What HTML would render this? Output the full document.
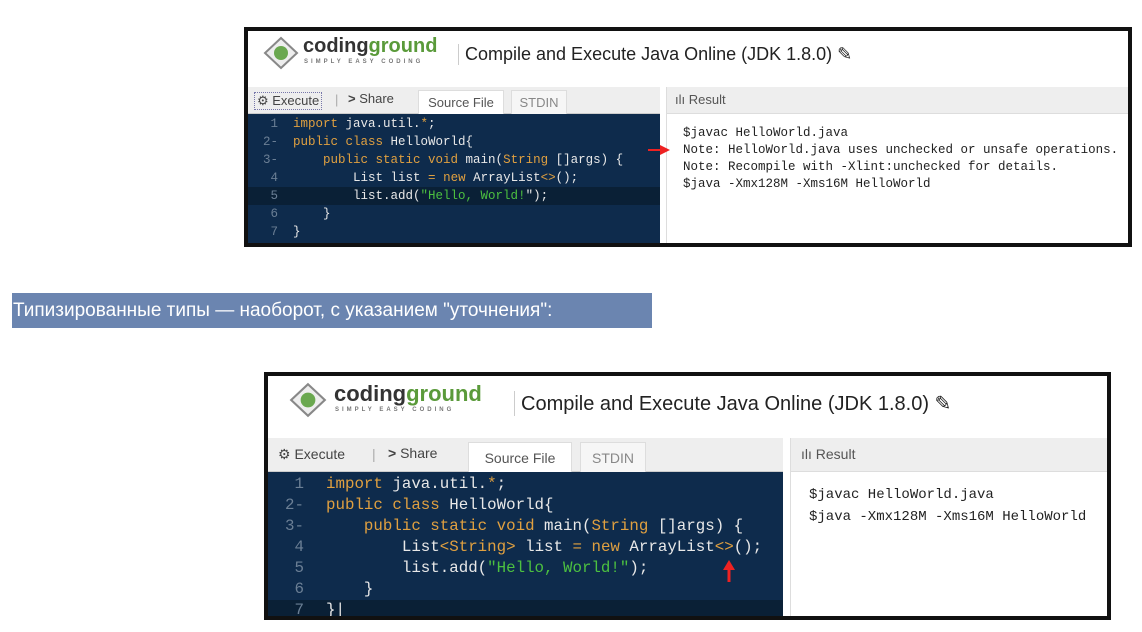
<!DOCTYPE html>
<html><head><meta charset="utf-8"><style>
*{margin:0;padding:0;box-sizing:border-box}
body{width:1142px;height:632px;background:#fff;position:relative;overflow:hidden;font-family:"Liberation Sans",sans-serif}
.box{position:absolute;border:4px solid #111;background:#fff;overflow:hidden}
.hdr{position:absolute;left:0;right:0;top:0;background:#fff}
.logo{position:absolute;font-family:"Liberation Sans",sans-serif;font-weight:bold;color:#333}
.logo b{color:#5a9a3a}
.sub{position:absolute;font-size:6px;letter-spacing:3px;color:#777;font-weight:bold}
.title{position:absolute;color:#222;font-family:"Liberation Sans",sans-serif;border-left:1px solid #ccc}
.tb{position:absolute;left:0;background:#eee;border-bottom:1px solid #ccc}
.tab{position:absolute;background:#f6f6f6;border:1px solid #ddd;border-bottom:none;color:#555;text-align:center}
.code{position:absolute;background:#0e2b4c;font-family:"Liberation Mono",monospace;color:#e8e8e8;white-space:pre}
.code div{position:absolute;left:0;right:0}
.ln{color:#6b7f95;position:absolute;text-align:right}
.c{position:absolute}
.k{color:#e0a040}.s{color:#4cc040}
.res{position:absolute;background:#fff;border-left:1px solid #ddd}
.rh{position:absolute;left:0;right:0;top:0;background:#eee;color:#555;border-bottom:1px solid #ddd}
.out{position:absolute;font-family:"Liberation Mono",monospace;color:#222;white-space:pre}
#b1 .ln{width:30px;left:0}#b1 .c{left:45px}
#b2 .ln{width:36px;left:0}#b2 .c{left:58px}
</style></head><body>

<div class="box" style="left:244px;top:27px;width:888px;height:220px">
 <div class="hdr" style="height:56px">
  <svg style="position:absolute;left:14px;top:5px" width="38" height="34" viewBox="0 0 38 34"><path d="M19 2 L35 17 L19 32 L3 17Z" fill="#eee" stroke="#888" stroke-width="2"/><circle cx="19" cy="17" r="7" fill="#6aa84f"/></svg>
  <div class="logo" style="left:55px;top:4px;font-size:20px">coding<b>ground</b></div>
  <div class="sub" style="left:56px;top:28px">SIMPLY EASY CODING</div>
  <div class="title" style="left:210px;top:13px;font-size:18px;padding-left:6px">Compile and Execute Java Online (JDK 1.8.0) ✎</div>
 </div>
 <div class="tb" style="top:56px;width:412px;height:27px;font-size:13px;color:#444">
  <span style="position:absolute;left:6px;top:5px;border:1px dotted #77a;padding:0 2px">⚙ Execute</span>
  <span style="position:absolute;left:87px;top:5px;color:#aaa">|</span>
  <span style="position:absolute;left:100px;top:4px"><b>&gt;</b> Share</span>
  <div class="tab" style="left:170px;top:3px;width:86px;height:24px;line-height:24px;background:#fff">Source File</div>
  <div class="tab" style="left:263px;top:3px;width:56px;height:24px;line-height:24px;color:#888">STDIN</div>
 </div>
 <div class="code" id="b1" style="left:0;top:83px;width:412px;height:133px;font-size:12.5px;line-height:18px">
  <div style="top:1px;height:18px"><span class="ln">1</span><span class="c"><span class="k">import</span> java.util.<span class="k">*</span>;</span></div>
  <div style="top:19px;height:18px"><span class="ln">2-</span><span class="c"><span class="k">public class</span> HelloWorld{</span></div>
  <div style="top:37px;height:18px"><span class="ln">3-</span><span class="c">    <span class="k">public static void</span> main(<span class="k">String</span> []args) {</span></div>
  <div style="top:55px;height:18px"><span class="ln">4</span><span class="c">        List list <span class="k">=</span> <span class="k">new</span> ArrayList<span class="k">&lt;&gt;</span>();</span></div>
  <div style="top:73px;height:18px;background:#0a2036"><span class="ln">5</span><span class="c">        list.add(<span class="s">"Hello, World!</span>");</span></div>
  <div style="top:91px;height:18px"><span class="ln">6</span><span class="c">    }</span></div>
  <div style="top:109px;height:18px"><span class="ln">7</span><span class="c">}</span></div>
 </div>
 <div class="res" style="left:418px;top:56px;width:470px;height:164px">
  <div class="rh" style="height:27px;font-size:13px;padding:5px 8px">ılı Result</div>
  <div class="out" style="left:16px;top:38px;font-size:12.5px;line-height:17px">$javac HelloWorld.java
Note: HelloWorld.java uses unchecked or unsafe operations.
Note: Recompile with -Xlint:unchecked for details.
$java -Xmx128M -Xms16M HelloWorld</div>
 </div>
 <svg style="position:absolute;left:400px;top:114px" width="24" height="10"><path d="M0 5 H14" stroke="#e22" stroke-width="2"/><path d="M12 0 L22 5 L12 10Z" fill="#e22"/></svg>
</div>

<div style="position:absolute;left:12px;top:293px;width:640px;height:35px;background:#6b85b0;color:#fff;font-size:19px;line-height:35px;padding-left:1px">Типизированные типы — наоборот, с указанием "уточнения":</div>

<div class="box" style="left:264px;top:372px;width:847px;height:248px">
 <div class="hdr" style="height:60px">
  <svg style="position:absolute;left:20px;top:6px" width="40" height="36" viewBox="0 0 38 34"><path d="M19 2 L35 17 L19 32 L3 17Z" fill="#eee" stroke="#888" stroke-width="2"/><circle cx="19" cy="17" r="7" fill="#6aa84f"/></svg>
  <div class="logo" style="left:66px;top:5px;font-size:22px">coding<b>ground</b></div>
  <div class="sub" style="left:67px;top:31px">SIMPLY EASY CODING</div>
  <div class="title" style="left:246px;top:15px;font-size:20px;padding-left:6px">Compile and Execute Java Online (JDK 1.8.0) ✎</div>
 </div>
 <div class="tb" style="top:62px;width:515px;height:34px;font-size:14px;color:#444">
  <span style="position:absolute;left:10px;top:8px">⚙ Execute</span>
  <span style="position:absolute;left:104px;top:8px;color:#aaa">|</span>
  <span style="position:absolute;left:120px;top:7px"><b>&gt;</b> Share</span>
  <div class="tab" style="left:200px;top:4px;width:104px;height:30px;line-height:30px;background:#fff">Source File</div>
  <div class="tab" style="left:312px;top:4px;width:66px;height:30px;line-height:30px;color:#888">STDIN</div>
 </div>
 <div class="code" id="b2" style="left:0;top:96px;width:515px;height:152px;font-size:15.8px;line-height:21px">
  <div style="top:2px;height:21px"><span class="ln">1</span><span class="c"><span class="k">import</span> java.util.<span class="k">*</span>;</span></div>
  <div style="top:23px;height:21px"><span class="ln">2-</span><span class="c"><span class="k">public class</span> HelloWorld{</span></div>
  <div style="top:44px;height:21px"><span class="ln">3-</span><span class="c">    <span class="k">public static void</span> main(<span class="k">String</span> []args) {</span></div>
  <div style="top:65px;height:21px"><span class="ln">4</span><span class="c">        List<span class="k">&lt;String&gt;</span> list <span class="k">=</span> <span class="k">new</span> ArrayList<span class="k">&lt;&gt;</span>();</span></div>
  <div style="top:86px;height:21px"><span class="ln">5</span><span class="c">        list.add(<span class="s">"Hello, World!"</span>);</span></div>
  <div style="top:107px;height:21px"><span class="ln">6</span><span class="c">    }</span></div>
  <div style="top:128px;height:24px;background:#0a2036"><span class="ln">7</span><span class="c">}|</span></div>
 </div>
 <svg style="position:absolute;left:455px;top:184px" width="12" height="22"><path d="M6 0 L12 10 L0 10Z" fill="#e22"/><path d="M6 8 V22" stroke="#e22" stroke-width="3"/></svg>
 <div class="res" style="left:522px;top:62px;width:325px;height:186px">
  <div class="rh" style="height:34px;font-size:14px;padding:8px 10px">ılı Result</div>
  <div class="out" style="left:18px;top:46px;font-size:14px;line-height:22px">$javac HelloWorld.java
$java -Xmx128M -Xms16M HelloWorld</div>
 </div>
</div>
</body></html>
